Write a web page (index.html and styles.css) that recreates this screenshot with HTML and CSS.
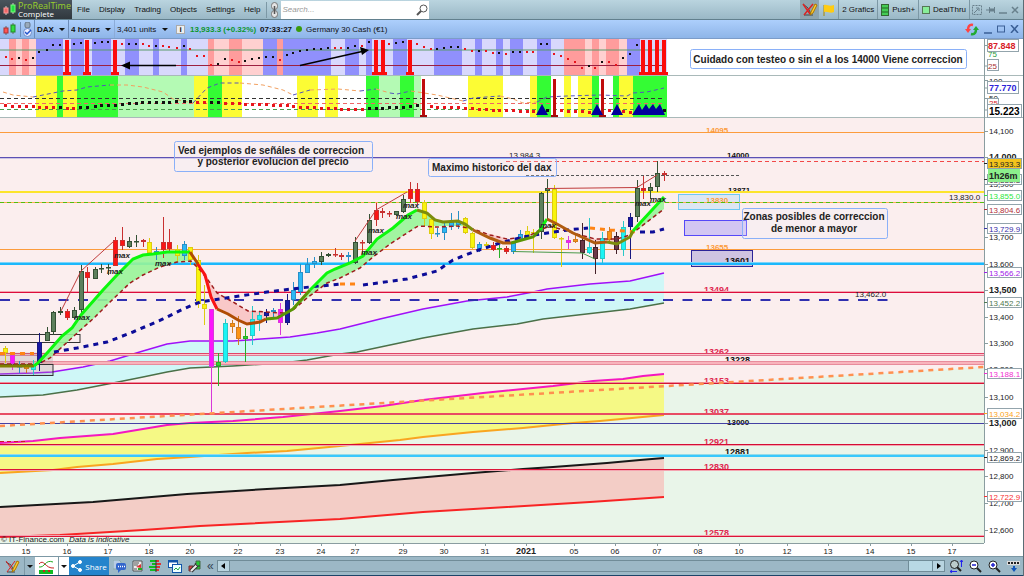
FILE: index.html
```html
<!DOCTYPE html>
<html lang="es">
<head>
    <meta charset="UTF-8">
    <meta name="viewport" content="width=device-width, initial-scale=1.0">
    <title>ProRealTime - DAX 4 hours</title>
    <link rel="stylesheet" href="styles.css">
</head>
<body>
    <header class="menubar">
        <div class="logo">
            <svg width="13" height="13" viewBox="0 0 13 13">
                <path d="M3 3v9M10 0v11" stroke="#ccc"/>
                <rect x="1" y="5" width="4" height="5" fill="#e66" stroke="#f99"/>
                <rect x="8" y="2" width="4" height="7" fill="#2d4" stroke="#7f7"/>
            </svg>
            <div class="logo-text"><span class="brand">ProRealTime</span><span>Complete</span></div>
        </div>
        <nav class="menu">
            <button type="button">File</button>
            <button type="button">Display</button>
            <button type="button">Trading</button>
            <button type="button">Objects</button>
            <button type="button">Settings</button>
            <button type="button">Help</button>
        </nav>
        <button type="button" class="chain" aria-label="Link">
            <svg width="9" height="16" viewBox="0 0 9 16" fill="none" stroke="#777">
                <rect x="1.500" y=".5" width="6" height="7" rx="3" fill="#e4e4e4"/><rect x="1.500" y="8.500" width="6" height="7" rx="3" fill="#e4e4e4"/><path d="M4.500 4v8" stroke="#555" stroke-width="1.500"/>
            </svg>
        </button>
        <div class="search">
            <input type="text" placeholder="Search..." aria-label="Search">
            <svg width="12" height="12" viewBox="0 0 12 12" fill="none" stroke="#555">
                <circle cx="7.500" cy="4.500" r="3.500"/><path d="M5 7L1 11" stroke-width="2"/>
            </svg>
        </div>
        <div class="menu-right">
            <button type="button" class="draw" aria-label="Draw">
                <svg width="16" height="15" viewBox="0 0 16 15" fill="none">
                    <path d="M1 2l5 4 3 6M2 13h9" stroke="#444"/><path d="M2 13L11 2M1 2l7 10" stroke="#d22" stroke-width="1.500"/><path d="M9 10l4-8 2 1-4 8-3 2z" fill="#fc3" stroke="#a70"/>
                </svg>
            </button>
            <button type="button" class="flag" aria-label="Flag">
                <svg width="12" height="12" viewBox="0 0 12 12"><path d="M1 1v11" stroke="#a80"/><path d="M1 1c3-1 5 2 10 0v7c-4 2-6-1-10 0z" fill="#fc1"/></svg>
            </button>
            <button type="button" class="cell">2 Grafics</button>
            <button type="button" class="cell">
                <svg width="8" height="12" viewBox="0 0 8 12"><rect x=".5" y=".5" width="7" height="11" fill="#4c5" stroke="#363"/><path d="M1 4h6M1 8h6" stroke="#262"/></svg>
                Push+
            </button>
            <button type="button" class="cell">
                <svg width="8" height="8" viewBox="0 0 8 8"><rect x=".5" y=".5" width="7" height="7" fill="#8e9" stroke="#575"/></svg>
                DealThru
            </button>
            <div class="window-icons">
                <button type="button" aria-label="Fit"><svg width="10" height="10" viewBox="0 0 10 10" fill="none" stroke="#68808c"><rect x=".5" y=".5" width="9" height="9" stroke-dasharray="2 1"/><path d="M2 8l4-4M4 3h3v3"/></svg></button>
                <button type="button" aria-label="Pin"><svg width="9" height="8" viewBox="0 0 9 8" fill="#68808c" stroke="#68808c"><path d="M0 4h3M3.500 1v6M8.500 1v6"/><path d="M4 3h4v2H4z"/></svg></button>
                <button type="button" aria-label="Minimize"><svg width="8" height="9" viewBox="0 0 8 9" stroke="#68808c"><path d="M0 8h8" stroke-width="1.500"/></svg></button>
                <button type="button" aria-label="Close"><svg width="8" height="8" viewBox="0 0 8 8" stroke="#68808c" stroke-width="1.500"><path d="M1 1l6 6M7 1L1 7"/></svg></button>
            </div>
        </div>
    </header>

    <div class="titlebar">
        <div class="chart-icon">
            <svg width="13" height="13" viewBox="0 0 13 13">
                <path d="M3 3v9M10 0v11" stroke="#666"/>
                <rect x="1" y="5" width="4" height="5" fill="#f55" stroke="#a33"/>
                <rect x="8" y="2" width="4" height="7" fill="#3d4" stroke="#282"/>
            </svg>
        </div>
        <div class="sync-icon">
            <svg width="9" height="15" viewBox="0 0 9 15" fill="none">
                <rect x="2" y="0" width="5" height="6" rx="2" fill="#9ab" stroke="#678"/>
                <circle cx="4.500" cy="10.500" r="4" fill="#eef" stroke="#6a8ac8"/><path d="M2 10l2 2 4-4" stroke="#25c" stroke-width="1.500"/>
            </svg>
        </div>
        <label class="picker bold"><select aria-label="Instrument"><option>DAX</option></select><span class="caret"></span></label>
        <label class="picker bold"><select aria-label="Timeframe"><option>4 hours</option></select><span class="caret"></span></label>
        <label class="picker"><select aria-label="Units"><option>3,401 units</option></select><span class="caret"></span></label>
        <span class="info">i</span>
        <span class="price">13,933.3 (+0.32%)</span>
        <span class="time">07:33:27</span>
        <span class="dot"></span>
        <span>Germany 30 Cash (€1)</span>
        <div class="title-right">
            <svg width="14" height="13" viewBox="0 0 14 13" fill="none" stroke-width="2.500">
                <path d="M8 2C4 1 3 4 3 7" stroke="#f44"/><path d="M0 6h6L3 10z" fill="#f44"/><path d="M6 11c4 1 5-2 5-5" stroke="#2a3"/><path d="M8 7h6l-3-4z" fill="#2a3"/>
            </svg>
            <button type="button" aria-label="Minimize chart"><svg width="8" height="9" viewBox="0 0 8 9"><path d="M0 8h8" stroke="#3a5f96" stroke-width="1.500"/></svg></button>
            <button type="button" aria-label="Maximize chart"><svg width="8" height="8" viewBox="0 0 8 8"><rect x=".5" y="1" width="7" height="6" fill="none" stroke="#3a5f96"/></svg></button>
            <button type="button" aria-label="Close chart"><svg width="9" height="8" viewBox="0 0 9 8"><path d="M1 0l7 8M8 0L1 8" stroke="#3a5f96" stroke-width="1.500"/></svg></button>
        </div>
    </div>

    <main class="charts">
        <!-- oscillator with overbought bars -->
        <svg class="panel" viewBox="0 39 1024 37">
            <g id="oscBands"></g>
            <path d="M0 50h664" stroke="#5a9a6a"/>
            <path d="M0 65.500h664" stroke="#9c2040"/>
            <g id="oscDots"></g>
            <g id="oscBars"></g>
            <path d="M176 65.500H128M300 65.500L362 51.500" stroke="#000" stroke-width="1.500"/>
            <path d="M121 65.500l9-4v8zM369 50l-9-3 2 8z"/>
            <rect class="note-box" x="690.500" y="49.500" width="276" height="19" rx="2"/>
            <text class="note" x="828" y="63" text-anchor="middle">Cuidado con testeo o sin el a los 14000 Viene correccion</text>
            <path d="M0 75.500h1024" stroke="#a9b9b9"/>
            <path d="M984.500 39v37M984 45.500h4M984 66h4" stroke="#8a9da0"/>
            <text class="tick green" x="988" y="57">75</text>
            <rect class="tag" x="987.500" y="59.500" width="11" height="11"/>
            <text class="tick darkred" x="988" y="69">25</text>
            <rect class="tag" x="987.500" y="39.500" width="31" height="12"/>
            <text class="tick big red" x="988" y="49">87.848</text>
        </svg>

        <svg class="panel" viewBox="0 76 1024 42">
            <g id="volBands"></g>
            <g fill="none" stroke-dasharray="4 3">
                <path d="M0 98.500h664" stroke="#333"/>
                <path d="M0 103.500h664" stroke="#e66"/>
                <path d="M0 109.500h664" stroke="#4a9a4a"/>
                <g stroke="#f2a060">
                    <path d="M3 92l10 3 20 2M110 85l17 0 16 2 20 5 10 7 20 4M240 83l23 2 20 5 10 5M310 90l28-1 22 2M376 89l14 4M411 91l26 4 26 6M500 96l13 3 10 4 14-1"/>
                </g>
                <g stroke="#55b">
                    <path d="M33 97l30-6 14-1 10-3 23-2M193 103l14-15 13-5 20 0M293 95l17-5M360 91l16-2M390 93l7 1 14-3M463 101l10-3 27-2M537 102l10-5 20-1 33-1 27 1 6-3 14-1 17-4"/>
                </g>
            </g>
            <g id="volDots"></g>
            <g id="volBars"></g>
            <path fill="#00009c" d="M536 115l6-11 6 11zM591 115l6-11 6 11zM611 115l6-11 6 11zM632 115l7-11 3 6 4-6 3 5 4-5 3 5 4-5 5 11z"/>
            <path d="M0 117.500h1024" stroke="#a9b9b9"/>
            <path d="M984.500 76v42M984 80.500h4M984 88h4M984 98.500h4M984 110h4" stroke="#8a9da0"/>
            <text class="tick" x="989" y="84">100</text>
            <text class="tick" x="989" y="101">50</text>
            <rect class="tag" x="987.500" y="98.500" width="11" height="9"/>
            <text class="tick red" x="989" y="106">25</text>
            <rect class="tag" x="987.500" y="81.500" width="31" height="12"/>
            <text class="tick big blue" x="989" y="91">77.770</text>
            <rect class="tag" x="987.500" y="104.500" width="34" height="13"/>
            <text class="tick huge" x="989" y="115">15.223</text>
        </svg>

        <svg class="panel" viewBox="0 118 1024 425">
            <rect x="0" y="118" width="984" height="425" fill="#fbeeee"/>
            <path d="M0 426L984 367V543H0z" fill="#e9f5e9"/>
            <!-- moving average bands -->
            <path id="cyanBand" fill="#cff7f7"/>
            <path id="yellowBand" fill="#f5f985"/>
            <path id="redBand" fill="#f3cdc6"/>
            <g fill="none" stroke-width="2">
                <path id="purpleLine" stroke="#a010f8" stroke-width="1.500"/>
                <path id="greenLine" stroke="#4a7048" stroke-width="1.500"/>
                <path id="magentaLine" stroke="#f418c0"/>
                <path id="orangeLine" stroke="#f9a520"/>
                <path id="blackLine" stroke="#181818"/>
                <path id="redLine" stroke="#f82424"/>
            </g>
            <!-- possible correction zones -->
            <rect x="678.500" y="194.500" width="61" height="15" fill="#dce6f2" stroke="#6cc8f4"/>
            <rect x="684.500" y="220.500" width="62" height="15" fill="#d2c6f2" stroke="#5548f8"/>
            <rect x="691.500" y="250.500" width="61" height="16" fill="#cfc4e2" stroke="#2c2498"/>
            <g id="levelLabels"></g>
            <text class="tick" x="509" y="158">13,984.3</text>
            <g id="levels"></g>
            <path d="M0 441.500h28" stroke="#d01828" stroke-dasharray="4 3"/>
            <path d="M0 426L984 367" fill="none" stroke="#ff9050" stroke-width="2.500" stroke-dasharray="5 5"/>
            <path d="M0 300h888" stroke="#3030b0" stroke-width="2" stroke-dasharray="10 9.500"/>
            <path d="M506 161.500h478" stroke="#f24848" stroke-dasharray="4 3"/>
            <path d="M526 175.500h214" stroke="#555" stroke-dasharray="3 2"/>
            <g fill="#9994" stroke="#333">
                <rect x="-1" y="334.500" width="81" height="8" fill="none"/>
                <rect x="-1" y="352.500" width="54" height="12" stroke="none"/>
                <rect x="-1" y="364.500" width="54" height="11"/>
            </g>
            <!-- clouds between fast and slow average -->
            <g fill="#98f498" opacity=".9">
                <path d="M38 363L48 352 62 336 72 328 81 315 103 290 117 275 133 259 143 255 167 252 191 252 191 261 177 262 160 267 143 275 130 283 110 302 95 317 90 322 75 335 50 358z"/>
                <path d="M293 309L310 290 327 273 335 269 350 263 363 256 377 239 393 228 408 215 417 210 427 213 435 220 443 222 458 221 465 226 443 226 418 226 407 233 390 244 373 257 360 268 340 278 327 283 307 298z"/>
                <path d="M633 231L640 223 664 196 664 209 640 228z"/>
            </g>
            <path d="M205 275L211 297 217 309 228 314 247 324 260 322 282 317 285 312 248 311 233 302 217 293z" fill="#f9c8c8"/>
            <g fill="#f9c8c8"><path d="M473 230L490 238 507 243 513 240 490 234zM573 233L595 243 617 243 617 239 595 239z"/></g>
            <g id="candles"></g>
            <!-- swing lines -->
            <path fill="none" stroke="#c03c3c" d="M61 311L81 271 114 241M355 241L376 210 407 192M547 188.500L637 187.500 657 175"/>
            <path fill="none" stroke="#4a9a4a" d="M513 251.500L582 253 595 259"/>
            <path fill="none" stroke="#9c1c1c" stroke-width="1.500" stroke-dasharray="4 3" d="M0 364H38L50 358 75 335 95 317 110 302 130 283 143 275 160 267 177 262 191 261 200 270 208 280 217 293 233 302 248 311 283 313 293 310 307 298 327 283 340 278 360 268 373 257 390 244 407 233 418 226 437 227 457 226 473 229 490 235 507 239 527 237 540 230 550 226 573 233 595 239 617 239 630 235 664 209"/>
            <g fill="none" stroke="#0c0c98" stroke-width="3" stroke-dasharray="5 5">
                <path d="M54 352L77 348 107 342 133 332 163 319 183 309 200 302 233 297 267 292 300 288 340 284M363 285L407 279 437 271 453 260 473 252 500 243 523 237 540 234 567 230 588 228M640 232L653 232 664 229"/>
                <path stroke="#ff8414" d="M0 353.500H34M340 284H360M590 228L610 230 638 232"/>
            </g>
            <g fill="none" stroke-width="3">
                <path stroke="#808000" d="M0 366H34"/>
                <path stroke="#0cf80c" d="M34 366L38 363 48 352 62 336 72 328 81 315 103 290 117 275 133 259 143 255 153 254 167 252 182 252 190 252"/>
                <path stroke="#f81414" d="M197 263L205 275 211 297 217 309"/>
                <path stroke="#b04c04" d="M190 252L198 264M217 309L228 314 238 320 247 324 260 322 266 319"/>
                <path stroke="#5a9404" d="M266 319L277 318 293 309 310 290"/>
                <path stroke="#0cf80c" d="M310 290L327 273 335 269 350 263 363 256 377 239 393 228 408 215 417 210"/>
                <path stroke="#7c8c0c" d="M417 210L427 213 435 220 443 222 458 221 465 224 473 230"/>
                <path stroke="#b05c10" d="M473 230L490 238 503 243 511 243"/>
                <path stroke="#5a9404" d="M511 243L533 237 540 230"/>
                <path stroke="#0cf80c" d="M540 230L547 219"/>
                <path stroke="#b05c10" d="M547 219L557 224 573 233 595 243 607 242"/>
                <path stroke="#7c8c0c" d="M607 242L617 244 630 237 633 231"/>
                <path stroke="#0cf80c" d="M633 231L640 223 664 197"/>
            </g>
            <g id="maxLabels"></g>
            <g class="note">
                <rect class="note-box clear" x="174.500" y="141.500" width="198" height="30" rx="2"/>
                <text x="271" y="154" text-anchor="middle">Ved ejemplos de señáles de correccion</text>
                <text x="273" y="165" text-anchor="middle">y posterior evolucion del precio</text>
                <rect class="note-box clear" x="428.500" y="158.500" width="128" height="18" rx="2"/>
                <text x="432" y="171">Maximo historico del dax</text>
                <rect class="note-box clear" x="742.500" y="208.500" width="145" height="30" rx="2"/>
                <text x="814" y="220" text-anchor="middle">Zonas posibles de correccion</text>
                <text x="814" y="232" text-anchor="middle">de menor a mayor</text>
            </g>
            <g class="tick">
                <text x="949" y="200">13,830.0</text>
                <text x="855" y="297">13,462.0</text>
                <text x="1" y="542">© IT-Finance.com</text>
                <text x="69" y="542" font-style="italic">Data is indicative</text>
            </g>
            <path d="M984.500 118v425" stroke="#8a9da0"/>
            <g id="priceAxis"></g>
        </svg>

        <svg class="panel" viewBox="0 543 1024 13">
            <path d="M0 543.500h984" stroke="#8a9da0"/>
            <g id="timeAxis"></g>
        </svg>
    </main>

    <footer class="toolbar">
        <button type="button" class="tool wide" aria-label="Draw tools">
            <svg width="15" height="13" viewBox="0 0 15 13" fill="none"><path d="M1 2l5 3 3 6M2 12h8" stroke="#444"/><path d="M2 12L10 1M1 1l7 10" stroke="#d22"/><path d="M8 9l4-8 2 1-4 8-3 2z" fill="#fc3" stroke="#a70"/></svg>
        </button>
        <button type="button" class="tool arrow" aria-label="More drawing"><span class="caret"></span></button>
        <button type="button" class="tool white" aria-label="Indicators">
            <svg width="15" height="15" viewBox="0 0 15 15" fill="none"><path d="M0 5c5-6 6 5 15 4" stroke="#c22"/><path d="M0 8C6 9 6 0 14 3" stroke="#2a2"/><path d="M0 15v-4h4v2h2v-2h3v2h2v-2h3v4z" fill="#1b2"/><path d="M4 12h2M9 12h2" stroke="#c22" stroke-width="2"/></svg>
        </button>
        <button type="button" class="tool white arrow" aria-label="More indicators"><span class="caret"></span></button>
        <button type="button" class="share">
            <svg width="12" height="12" viewBox="0 0 12 12" fill="#fff" stroke="#fff"><path d="M9 2L2 6l7 4" fill="none"/><circle cx="9" cy="2" r="1.500"/><circle cx="2" cy="6" r="1.500"/><circle cx="9" cy="10" r="1.500"/></svg>
            Share
        </button>
        <div class="tool-icons">
            <button type="button" aria-label="Chat"><svg width="13" height="13" viewBox="0 0 13 13"><path d="M0 0h6l2 2v7H0z" fill="#b8cce4" stroke="#8aa"/><rect x="3" y="3" width="10" height="7" rx="2" fill="#36c"/><path d="M5 9v4l4-4z" fill="#36c"/><path d="M5 6.500h7" stroke="#fff" stroke-width="1.500" stroke-dasharray="1 1"/></svg></button>
            <button type="button" aria-label="News"><svg width="11" height="12" viewBox="0 0 11 12" fill="none"><path d="M1 1h9v10H1z" fill="#eee" stroke="#555"/><path d="M2 3h5M2 5h4M2 9h3" stroke="#555"/><path d="M4 7l5-3v4z" fill="#d33"/><path d="M6 9h4" stroke="#2a2" stroke-width="2"/></svg></button>
            <button type="button" aria-label="Order book"><svg width="13" height="12" viewBox="0 0 13 12"><path d="M1 1h6M3 4h4M0 7h7M1 10h6" stroke="#1b2" stroke-width="2"/><path d="M7 1h3M7 4h5M7 7h4M7 10h3" stroke="#d33" stroke-width="2"/><path d="M7 0v12" stroke="#333"/></svg></button>
            <button type="button" aria-label="Windows"><svg width="14" height="13" viewBox="0 0 14 13" fill="none" stroke="#15a"><rect x=".5" y=".5" width="9" height="7" fill="#fff"/><path d="M0 1.500h9M5 5.500h8" stroke-width="2"/><rect x="4.500" y="4.500" width="9" height="8" fill="#eff"/><path d="M6 10l2-2 2 2 2-3" stroke="#2a4"/></svg></button>
            <button type="button" aria-label="Trading tools"><svg width="13" height="13" viewBox="0 0 13 13"><path d="M8 1h4v8H8z" fill="#2c3" stroke="#464"/><path d="M1 6h4v5H1z" fill="#d44" stroke="#633"/><path d="M3 11l6-6" stroke="#333" stroke-width="4"/><path d="M3 11l6-6" stroke="#eee" stroke-width="2"/><path d="M7 3l2 3 3 0" fill="none" stroke="#333"/></svg></button>
            <button type="button" class="collapse" aria-label="Collapse">«</button>
        </div>
        <div class="scroll">
            <button type="button" aria-label="Scroll left"><svg width="4" height="6" viewBox="0 0 4 6"><path d="M4 0v6L0 3z"/></svg></button>
            <div class="track"><div class="thumb"></div></div>
            <button type="button" aria-label="Scroll right"><svg width="4" height="6" viewBox="0 0 4 6"><path d="M0 0v6l4-3z"/></svg></button>
        </div>
        <div class="zoom-icons">
            <button type="button" aria-label="Fit zoom"><svg width="14" height="14" viewBox="0 0 14 14" fill="none" stroke="#222"><circle cx="5.500" cy="5.500" r="4" fill="#bcc"/><path d="M8 8l4 4" stroke-width="2"/><path d="M12.500 1v7M11 3l1.500-2L14 3M1 12.500h7M3 11l-2 1.500L3 14" stroke="#22e"/></svg></button>
            <button type="button" aria-label="Zoom out"><svg width="13" height="13" viewBox="0 0 13 13" fill="none" stroke="#222"><circle cx="5" cy="5" r="4" fill="#fff"/><path d="M8 8l4 4" stroke-width="2"/><path d="M3 5h4" stroke="#22c" stroke-width="1.500"/></svg></button>
            <button type="button" aria-label="Zoom in"><svg width="13" height="13" viewBox="0 0 13 13" fill="none" stroke="#222"><circle cx="5" cy="5" r="4" fill="#fff"/><path d="M8 8l4 4" stroke-width="2"/><path d="M3 5h4M5 3v4" stroke="#22c" stroke-width="1.500"/></svg></button>
            <button type="button" aria-label="Scale"><svg width="13" height="12" viewBox="0 0 13 12" fill="none"><path d="M0 1h13v4H0z" fill="#ddd"/><path d="M1 3h12" stroke="#222" stroke-width="2" stroke-dasharray="2 1"/><path d="M7 6v4" stroke="#15b" stroke-width="2"/><path d="M4 8h6l-3 4z" fill="#15b"/></svg></button>
        </div>
    </footer>
    <script src="chart.js"></script>
</body>
</html>
```
FILE: styles.css
```css
* {
    box-sizing: border-box;
}

body {
    margin: 0;
    min-height: 100vh;
    display: flex;
    flex-direction: column;
    background-color: #fff;
    font-family: "Liberation Sans", Arial, sans-serif;
    font-size: 8px;
    color: #111;
    border-right: 1px solid #5a6c74;
}

button {
    font: inherit;
    color: inherit;
    background: none;
    border: none;
    padding: 0;
    cursor: pointer;
}

svg {
    display: block;
    flex-shrink: 0;
}

/* top menu */
.menubar {
    display: flex;
    align-items: center;
    height: 20px;
    background: linear-gradient(#bad4df, #9ab8c6);
    border-bottom: 1px solid #62808e;
}

.logo {
    display: flex;
    align-items: center;
    gap: 2px;
    width: 72px;
    height: 100%;
    padding-left: 3px;
    background: linear-gradient(#4a545c, #30383e);
    color: #fff;
}

.logo-text {
    display: flex;
    flex-direction: column;
    font-family: "Open Sans", sans-serif;
    font-size: 8px;
    line-height: 8px;
}

.brand {
    color: #9ad02c;
    font-size: 9px;
}

.menu {
    display: flex;
    gap: 9px;
    padding: 0 6px 0 5px;
}

.chain {
    display: flex;
    justify-content: center;
    width: 15px;
    border-left: 1px solid #7c98a5;
}

.search {
    display: flex;
    align-items: center;
    width: 148px;
    height: 18px;
    padding: 0 1px;
    background-color: #fff;
}

.search input {
    flex: 1;
    min-width: 0;
    border: none;
    padding: 0;
    font: inherit;
    font-style: italic;
    outline: none;
}

.search input::placeholder {
    color: #999;
}

.menu-right {
    display: flex;
    align-items: center;
    height: 100%;
    margin-left: auto;
}

.draw {
    display: flex;
    align-items: center;
    justify-content: center;
    width: 19px;
    height: 19px;
    background-color: #8da5b0;
}

.flag {
    padding: 0 3px 0 4px;
}

.cell {
    display: flex;
    align-items: center;
    gap: 3px;
    height: 100%;
    padding: 0 3px;
    border-left: 1px solid #7c98a5;
}

.window-icons {
    display: flex;
    align-items: center;
    gap: 4px;
    height: 100%;
    padding: 0 4px 0 2px;
    border-left: 1px solid #7c98a5;
}

/* chart title */
.titlebar {
    display: flex;
    align-items: center;
    height: 19px;
    background: linear-gradient(#adcffc, #8eb5e8);
    border-bottom: 1px solid #7c9cc8;
    white-space: nowrap;
}

.chart-icon {
    padding: 0 4px 0 3px;
}

.sync-icon {
    padding: 0 2px;
    border-left: 1px solid #6c8cb8;
}

.picker {
    display: flex;
    align-items: center;
    gap: 5px;
    height: 100%;
    padding: 0 3px 0 2px;
    border-left: 1px solid #6c8cb8;
}

.picker + .picker + .picker {
    border-left-color: #8cacd8;
}

.picker select {
    appearance: none;
    border: none;
    background: none;
    padding: 0;
    font: inherit;
    color: inherit;
}

.bold {
    font-weight: bold;
}

.caret {
    display: inline-block;
    border: 3px solid transparent;
    border-top: 3px solid #111;
    border-bottom: none;
}

.info {
    width: 9px;
    height: 9px;
    margin: 0 5px;
    background-color: #eee;
    border: 1px solid #aaa;
    font-weight: bold;
    line-height: 8px;
    text-align: center;
}

.price {
    color: #0c962c;
    font-weight: bold;
}

.time {
    margin: 0 4px;
    font-weight: bold;
}

.dot {
    width: 6px;
    height: 6px;
    margin-right: 4px;
    border-radius: 50%;
    background-color: #3a9a0c;
}

.title-right {
    display: flex;
    align-items: center;
    gap: 5px;
    margin-left: auto;
    padding-right: 4px;
}

/* panels */
.charts {
    margin-right: -1px;
}

.panel {
    width: 100%;
    height: auto;
}

.panel text {
    fill: #222;
}

.panel .note {
    font-size: 10px;
    font-weight: bold;
}

.note-box {
    fill: #fff;
    stroke: #8ab0f8;
}

.note-box.clear {
    fill: #f0f0ff;
    fill-opacity: .2;
}

.tag {
    fill: #fff;
    stroke: #93a4ac;
}

.tick {
    font-size: 8px;
}

.panel .bold {
    font-size: 9px;
    font-weight: bold;
}

.panel .big {
    font-size: 9px;
    font-weight: bold;
}

.panel .huge {
    font-size: 10px;
    font-weight: bold;
    fill: #000;
}

.panel .red {
    fill: #d81c28;
}

.panel .darkred {
    fill: #a83030;
}

.panel .green {
    fill: #2c9c3c;
}

.panel .blue {
    fill: #2c24d8;
}

.max {
    font-size: 8px;
    font-style: italic;
    font-weight: bold;
}

/* bottom toolbar */
.toolbar {
    display: flex;
    align-items: center;
    height: 20px;
    background-color: #9cb8c6;
    border-top: 1px solid #7c98a5;
    border-bottom: 1px solid #1c4468;
}

.tool {
    display: flex;
    align-items: center;
    justify-content: center;
    width: 23px;
    height: 100%;
}

.wide {
    width: 24px;
}

.arrow {
    width: 11px;
    border-left: 1px solid #7c98a5;
}

.white {
    background-color: #fff;
}

.share {
    display: flex;
    align-items: center;
    justify-content: center;
    gap: 2px;
    width: 40px;
    height: 100%;
    background-color: #2484cc;
    color: #fff;
    font-family: "Open Sans", sans-serif;
}

.tool-icons {
    display: flex;
    align-items: center;
    gap: 6px;
    padding: 0 3px 0 4px;
}

.collapse {
    font-size: 12px;
    line-height: 12px;
    color: #345;
}

.scroll {
    display: flex;
    flex: 1;
    height: 12px;
    border: 1px solid #708c98;
}

.scroll button {
    display: flex;
    align-items: center;
    justify-content: center;
    width: 11px;
    background-color: #b8d4e0;
}

.track {
    display: flex;
    flex: 1;
    justify-content: flex-end;
    border-left: 1px solid #708c98;
    border-right: 1px solid #708c98;
}

.thumb {
    width: 24px;
    background-color: #b8d8e4;
    border-left: 1px solid #708c98;
}

.zoom-icons {
    display: flex;
    align-items: center;
    gap: 6px;
    padding: 0 3px 0 4px;
}
```
FILE: chart.js
```js
const NS = "http://www.w3.org/2000/svg";

function add(parentId, tag, attrs, text) {
    const el = document.createElementNS(NS, tag);
    for (const key in attrs) {
        el.setAttribute(key, attrs[key]);
    }
    if (text) {
        el.textContent = text;
    }
    document.getElementById(parentId).appendChild(el);
}

// coloured background bands: [start, end, colour key]
const bandColors = { L: "#d8d8fc", B: "#9090fc", S: "#ff9c9c", P: "#ffd0d0", Y: "#fcfc34", G: "#34fc34", g: "#b4fab4" };

function drawBands(id, y, height, bands) {
    bands.forEach(([x1, x2, c]) => add(id, "rect", { x: x1, y: y, width: x2 - x1, height: height, fill: bandColors[c] }));
}

drawBands("oscBands", 39, 37, [
    [0, 667, "L"], [9, 16, "S"], [16, 22, "P"], [22, 29, "S"], [29, 36, "P"], [36, 63, "B"], [71, 84, "B"], [92, 111, "B"],
    [125, 139, "B"], [153, 159, "B"], [181, 187, "B"], [208, 214, "S"], [214, 229, "P"], [229, 242, "S"], [242, 263, "P"],
    [263, 277, "B"], [277, 283, "S"], [283, 331, "B"], [345, 359, "B"], [366, 372, "B"], [393, 407, "B"], [434, 462, "B"],
    [475, 482, "B"], [496, 503, "B"], [510, 523, "B"], [537, 551, "B"], [564, 585, "S"], [585, 592, "P"], [592, 599, "S"],
    [599, 606, "P"], [606, 619, "S"], [619, 627, "P"], [627, 640, "B"]
]);
drawBands("volBands", 76, 42, [
    [36, 57, "Y"], [57, 63, "G"], [63, 77, "Y"], [77, 118, "G"], [118, 194, "g"], [194, 208, "Y"], [208, 222, "G"],
    [222, 242, "Y"], [297, 318, "Y"], [325, 338, "Y"], [366, 379, "G"], [379, 400, "g"], [400, 414, "G"], [414, 421, "g"],
    [468, 503, "Y"], [530, 537, "Y"], [537, 551, "G"], [564, 571, "Y"], [578, 592, "Y"], [592, 599, "G"], [613, 619, "G"],
    [619, 633, "Y"], [633, 667, "G"]
]);

// square markers, r = red, k = black
function drawDots(id, size, dots) {
    dots.forEach(([x, y, c]) => add(id, "rect", { x: x - 1, y: y - 1, width: size, height: size, fill: c === "r" ? "#e8141c" : "#101010" }));
}

drawDots("oscDots", 2, [
    [6, 57, "r"], [12, 59, "r"], [19, 58, "k"], [26, 60, "r"], [33, 58, "k"], [39, 52, "k"], [47, 50, "k"], [53, 45, "k"], [60, 45, "k"],
    [74, 44, "k"], [81, 43, "k"], [95, 43, "k"], [102, 42, "k"], [108, 42, "k"], [122, 44, "r"], [129, 44, "k"], [136, 44, "k"],
    [143, 44, "r"], [149, 46, "r"], [156, 46, "k"], [163, 46, "r"], [169, 47, "r"], [177, 48, "r"], [184, 46, "k"], [190, 49, "r"],
    [197, 56, "r"], [204, 56, "r"], [211, 65, "r"], [218, 64, "k"], [225, 59, "k"], [232, 60, "r"], [239, 62, "r"], [245, 61, "k"],
    [252, 59, "k"], [259, 58, "k"], [266, 57, "k"], [273, 57, "k"], [280, 60, "r"], [287, 55, "k"], [293, 53, "k"], [300, 51, "k"],
    [307, 50, "k"], [314, 49, "k"], [321, 49, "k"], [328, 48, "k"], [335, 48, "r"], [341, 48, "r"], [348, 48, "k"], [355, 46, "k"],
    [362, 46, "r"], [369, 42, "k"], [389, 44, "r"], [396, 43, "k"], [403, 42, "k"], [417, 44, "r"], [424, 47, "r"], [431, 49, "r"],
    [437, 49, "k"], [444, 48, "k"], [451, 47, "k"], [458, 47, "k"], [465, 49, "r"], [472, 51, "r"], [479, 51, "k"], [486, 51, "r"],
    [493, 53, "r"], [499, 53, "k"], [506, 54, "r"], [513, 52, "k"], [520, 52, "k"], [527, 52, "r"], [533, 52, "r"], [541, 44, "k"],
    [547, 44, "k"], [554, 54, "r"], [561, 56, "r"], [568, 59, "r"], [575, 62, "r"], [582, 68, "r"], [589, 66, "k"], [595, 68, "r"],
    [602, 62, "k"], [609, 62, "r"], [616, 65, "r"], [623, 58, "k"], [630, 54, "k"], [637, 45, "k"]
]);
drawDots("volDots", 3, [
    [5, 105, "r"], [12, 106, "r"], [19, 106, "r"], [26, 106, "r"], [33, 106, "r"], [39, 107, "r"], [46, 107, "r"], [53, 107, "r"],
    [60, 107, "k"], [67, 108, "r"], [73, 108, "r"], [80, 107, "k"], [87, 107, "k"], [95, 106, "k"], [101, 105, "k"], [108, 105, "k"],
    [115, 105, "k"], [122, 104, "k"], [129, 103, "k"], [136, 103, "k"], [142, 102, "k"], [149, 102, "k"], [156, 102, "k"],
    [163, 102, "k"], [169, 102, "k"], [176, 101, "k"], [184, 101, "k"], [190, 101, "k"], [197, 102, "r"], [204, 102, "r"],
    [211, 102, "k"], [218, 102, "k"], [225, 103, "r"], [232, 103, "r"], [239, 103, "r"], [245, 104, "r"], [252, 104, "r"],
    [259, 104, "r"], [266, 104, "r"], [273, 105, "r"], [280, 105, "r"], [287, 105, "r"], [293, 106, "r"], [300, 107, "r"],
    [307, 107, "r"], [314, 107, "r"], [321, 108, "r"], [328, 108, "r"], [335, 108, "r"], [341, 109, "r"], [348, 109, "r"],
    [355, 109, "r"], [362, 109, "r"], [369, 108, "k"], [376, 108, "k"], [382, 108, "k"], [389, 107, "k"], [396, 107, "k"],
    [403, 107, "k"], [410, 106, "k"], [417, 105, "k"], [431, 106, "r"], [437, 107, "r"], [444, 107, "r"], [451, 107, "r"],
    [458, 107, "r"], [465, 108, "r"], [472, 108, "r"], [479, 109, "r"], [486, 109, "r"], [493, 110, "r"], [499, 110, "r"],
    [506, 110, "r"], [513, 110, "r"], [520, 111, "r"], [527, 111, "r"], [533, 111, "r"], [547, 110, "k"], [561, 110, "r"],
    [568, 111, "r"], [575, 111, "r"], [582, 111, "r"], [589, 112, "r"], [609, 110, "r"], [623, 111, "r"], [630, 112, "r"], [664, 110, "k"]
]);

[67, 87, 115, 376, 383, 410, 643, 650, 657, 664].forEach(x => {
    add("oscBars", "rect", { x: x - 2, y: 40, width: 4, height: 36, fill: "#fc0c0c" });
    add("oscBars", "rect", { x: x - 4, y: 72, width: 8, height: 4, fill: "#fc0c0c" });
});
[423, 554, 602].forEach(x => {
    add("volBars", "rect", { x: x - 1, y: 79, width: 3, height: 39, fill: "#c00c0c" });
    add("volBars", "rect", { x: x - 3, y: 115, width: 7, height: 3, fill: "#a00c0c" });
});

// long averages
const purple = "0,374 33,373 52,372 83,367 110,361 143,351 167,344 190,341 233,341 290,337 317,333 340,329 380,319 423,309 467,301 507,297 533,292 547,289 590,284 630,281 664,273";
const green = "0,397 43,395 77,390 113,383 143,377 167,372 190,368 233,366 283,363 307,360 340,354 357,352 390,345 423,338 473,329 517,324 543,319 630,309 664,303";
const magenta = "0,443 33,441 60,438 113,434 167,425 190,423 233,421 283,417 340,411 383,406 423,400 483,393 553,386 593,381 623,379 643,376 664,374";
const orange = "0,473 53,470 77,467 113,464 157,459 190,457 247,453 287,451 340,446 400,440 423,437 473,432 523,428 573,423 600,421 664,415";
const black = "0,507 93,502 187,494 267,489 340,485 393,480 473,473 523,469 553,467 607,463 640,460 664,458";
const red = "0,537 60,535 143,530 200,526 340,519 423,512 507,507 590,502 664,497";

function drawLine(id, points) {
    document.getElementById(id).setAttribute("d", "M" + points.split(" ").join("L"));
}

function drawBand(id, top, bottom) {
    const all = top.split(" ").concat(bottom.split(" ").reverse());
    document.getElementById(id).setAttribute("d", "M" + all.join("L") + "z");
}

drawLine("purpleLine", purple);
drawLine("greenLine", green);
drawLine("magentaLine", magenta);
drawLine("orangeLine", orange);
drawLine("blackLine", black);
drawLine("redLine", red);
drawBand("cyanBand", purple, green);
drawBand("yellowBand", magenta, orange);
drawBand("redBand", black, red);

// horizontal levels: [y, height, colour]
[
    [132, 1, "#fc9c3c"], [157, 1, "#5c50b4"], [158, 1, "#ccc4e4"], [191, 2, "#fce42c"], [202, 1, "#fcac54"], [249, 1, "#fc9c3c"],
    [262, 1, "#7cd4f8"], [263, 2, "#1cb8fc"], [291, 1, "#f4a4b0"], [292, 1, "#dc0c3c"], [353, 1, "#e04468"], [354, 1, "#fcc4cc"], [355, 1, "#e07c94"],
    [361, 4, "#f8b4bc"], [361, 1, "#e88c9c"], [364, 1, "#e88c9c"], [382, 1, "#f08c9c"], [383, 1, "#d41434"],
    [413, 2, "#e84c64"], [423, 1, "#4440a4"], [444, 1, "#d40c34"], [445, 1, "#f4a4b0"], [454, 1, "#94dce8"],
    [455, 2, "#38c8fc"], [469, 1, "#dc1438"], [470, 1, "#f4a4b0"], [535, 1, "#f4a4b0"], [536, 1, "#dc1438"]
].forEach(([y, h, c]) => add("levels", "rect", { x: 0, y: y, width: 984, height: h, fill: c }));
add("levels", "path", { d: "M0 202.5H984", stroke: "#54bc0c", "stroke-dasharray": "4 3" });

[
    [706, 133, 8, "#fc9c3c", "14095"], [727, 158, 8, "#111", "14000"], [728, 193, 8, "#111", "13871"],
    [706, 203, 8, "#fc9c3c", "13830"], [706, 250, 8, "#fc9c3c", "13655"], [725, 264, 9, "#111", "13601"],
    [704, 293, 9, "#e02850", "13494"], [704, 355, 9, "#e02850", "13262"], [725, 363, 9, "#111", "13228"],
    [704, 384, 9, "#e02850", "13153"], [704, 415, 9, "#e02850", "13037"], [727, 425, 8, "#111", "13000"],
    [704, 445, 9, "#e02850", "12921"], [725, 455, 9, "#111", "12881"], [704, 470, 9, "#e02850", "12830"],
    [704, 536, 9, "#e02850", "12578"]
].forEach(([x, y, size, c, t]) => add("levelLabels", "text", { x: x, y: y, style: "fill:" + c, "font-size": size, "font-weight": "bold" }, t));

// candles: [x, high, low, body top, body bottom, colour key]
const candleColors = {
    R: ["#fc1414", "#c83030"], G: ["#5c805c", "#345034"], Y: ["#f8f40c", "#dccc10"], M: ["#fc14fc", "#d838d8"],
    C: ["#1cf4f4", "#28c8c8"], B: ["#2cb8f4", "#2890c8"], N: ["#1818a4", "#181880"], O: ["#fc9414", "#d07c20"],
    g: ["#30d430", "#28b028"], P: ["#6c3848", "#442028"]
};
[
    [5, 346, 363, 348, 353, "Y"], [12, 353, 370, 355, 364, "M"], [19, 361, 373, 366, 367, "B"], [26, 364, 373, 366, 369, "O"],
    [33, 360, 375, 365, 370, "C"], [39, 333, 371, 342, 363, "N"], [47, 327, 341, 332, 341, "G"], [53, 311, 335, 312, 332, "G"],
    [60, 307, 315, 311, 313, "G"], [67, 309, 320, 311, 318, "R"], [74, 307, 319, 310, 318, "G"], [81, 265, 316, 271, 310, "G"],
    [87, 267, 292, 272, 278, "R"], [95, 267, 279, 269, 279, "G"], [101, 264, 273, 268, 269, "G"], [108, 264, 275, 267, 268, "G"],
    [115, 237, 266, 240, 266, "R"], [122, 227, 250, 240, 246, "R"], [129, 237, 248, 241, 247, "G"], [136, 235, 247, 241, 242, "G"],
    [143, 239, 247, 240, 242, "R"], [149, 238, 255, 242, 253, "Y"], [156, 247, 260, 251, 253, "B"], [163, 217, 258, 242, 250, "R"],
    [169, 229, 252, 242, 249, "R"], [177, 245, 261, 249, 256, "Y"], [184, 241, 260, 244, 256, "B"], [190, 247, 265, 247, 260, "Y"],
    [198, 255, 308, 260, 304, "Y"], [204, 285, 325, 304, 309, "Y"], [211, 309, 412, 309, 367, "M"], [218, 353, 386, 362, 366, "g"],
    [225, 319, 363, 323, 362, "C"], [232, 320, 333, 323, 327, "O"], [238, 316, 345, 327, 339, "O"], [245, 328, 362, 336, 339, "g"],
    [252, 306, 345, 319, 336, "C"], [259, 311, 331, 315, 320, "C"], [266, 309, 323, 312, 316, "N"], [273, 308, 317, 310, 312, "B"],
    [280, 303, 335, 309, 323, "M"], [287, 294, 325, 300, 323, "N"], [293, 282, 305, 290, 300, "B"], [300, 264, 295, 272, 292, "B"],
    [307, 258, 273, 264, 273, "B"], [314, 257, 268, 261, 264, "B"], [321, 252, 265, 256, 262, "G"], [328, 253, 257, 254, 256, "G"],
    [335, 248, 257, 254, 255, "R"], [341, 253, 260, 255, 257, "R"], [348, 252, 262, 255, 257, "B"], [355, 237, 264, 242, 263, "G"],
    [362, 240, 258, 242, 243, "R"], [369, 214, 244, 220, 243, "G"], [376, 203, 226, 210, 220, "R"], [382, 208, 218, 211, 213, "R"],
    [389, 211, 217, 213, 214, "R"], [396, 211, 216, 211, 215, "G"], [403, 195, 213, 199, 212, "G"], [410, 182, 203, 189, 199, "R"],
    [417, 183, 205, 189, 202, "R"], [424, 200, 226, 202, 219, "Y"], [431, 217, 239, 219, 234, "Y"], [437, 228, 237, 233, 234, "B"],
    [444, 223, 240, 227, 233, "B"], [451, 213, 230, 222, 227, "B"], [458, 211, 229, 221, 225, "B"], [465, 217, 234, 218, 233, "Y"],
    [472, 232, 249, 233, 248, "Y"], [479, 242, 252, 244, 249, "B"], [486, 242, 247, 244, 246, "Y"], [493, 242, 251, 245, 250, "R"],
    [499, 245, 258, 248, 249, "g"], [506, 246, 254, 248, 252, "R"], [513, 241, 254, 243, 252, "B"], [520, 230, 240, 234, 239, "B"],
    [527, 226, 237, 231, 236, "Y"], [533, 229, 253, 232, 233, "Y"], [541, 192, 239, 193, 232, "G"], [547, 179, 220, 188, 191, "G"],
    [554, 185, 239, 189, 238, "Y"], [561, 237, 267, 238, 239, "Y"], [568, 236, 249, 240, 243, "M"], [575, 235, 243, 239, 242, "O"],
    [582, 223, 259, 240, 253, "P"], [589, 218, 254, 247, 253, "C"], [595, 240, 274, 247, 259, "P"], [602, 232, 263, 238, 259, "C"],
    [609, 227, 243, 231, 240, "O"], [616, 232, 254, 236, 250, "P"], [623, 221, 256, 227, 250, "C"], [630, 213, 259, 217, 227, "N"],
    [637, 180, 222, 188, 217, "G"], [643, 176, 199, 188, 191, "R"], [650, 183, 199, 187, 191, "G"], [657, 161, 192, 173, 187, "G"],
    [664, 171, 181, 173, 175, "R"]
].forEach(([x, high, low, top, bottom, c]) => {
    const [fill, edge] = candleColors[c];
    add("candles", "path", { d: `M${x + 0.5} ${high}V${low}`, stroke: edge });
    add("candles", "rect", { x: x - 1.5, y: top + 0.5, width: 4, height: Math.max(bottom - top - 1, 0.5), fill: fill, stroke: edge });
});

[[74, 320], [107, 274], [114, 258], [155, 266], [361, 255], [368, 233], [396, 219], [403, 208], [540, 228], [635, 206], [650, 202]]
    .forEach(([x, y]) => add("maxLabels", "text", { x: x, y: y, class: "max" }, "max"));

// price axis
function tick(y, text, cls) {
    add("priceAxis", "path", { d: `M984 ${y - 2.5}h4`, stroke: "#8a9da0" });
    add("priceAxis", "text", { x: 989, y: y, class: "tick " + (cls || "") }, text);
}
tick(134, "14,100"); tick(160, "14,000", "bold"); tick(187, "13,900"); tick(240, "13,700"); tick(267, "13,600");
tick(293, "13,500", "bold"); tick(320, "13,400"); tick(346, "13,300"); tick(372, "13,200"); tick(400, "13,100");
tick(426, "13,000", "bold"); tick(453, "12,900"); tick(479, "12,800"); tick(506, "12,700"); tick(533, "12,600");

// value tags on the price axis: [y, text, text colour, background]
[
    [174, "13,883.8", "#333", "#fff"], [158, "13,933.3", "#222", "#f4c41c"], [190, "13,855.0", "#2ce83c", "#fff"], [204, "13,804.6", "#b03038", "#fff"],
    [223, "13,729.9", "#3830a8", "#fff"], [267, "13,566.2", "#a020e8", "#fff"], [297, "13,452.2", "#507850", "#fff"],
    [368, "13,188.1", "#f030d0", "#fff"], [408, "13,034.2", "#fca424", "#fff"], [452, "12,869.2", "#222", "#fff"],
    [491, "12,722.9", "#f83030", "#fff"]
].forEach(([y, t, c, bg]) => {
    add("priceAxis", "path", { d: `M984 ${y + 5.5}h4`, stroke: c });
    add("priceAxis", "rect", { x: 987.5, y: y + 0.5, width: 34, height: 10, style: "fill:" + bg, class: "tag" });
    add("priceAxis", "text", { x: 989, y: y + 9, class: "tick", style: "fill:" + c }, t);
});
add("priceAxis", "rect", { x: 988, y: 169, width: 32, height: 13, fill: "#8cf08c" });
add("priceAxis", "text", { x: 989, y: 179, class: "bold" }, "1h26m");

// dates
[
    [26, "15"], [67, "16"], [108, "17"], [149, "18"], [190, "20"], [238, "22"], [280, "23"], [321, "24"], [355, "27"], [403, "29"],
    [444, "30"], [485, "31"], [526, "2021"], [574, "05"], [615, "06"], [657, "07"], [698, "08"], [739, "10"], [787, "12"],
    [828, "13"], [870, "14"], [911, "15"], [952, "17"]
].forEach(([x, t]) => {
    add("timeAxis", "path", { d: `M${x + 0.5} 543v3`, stroke: "#8a9da0" });
    add("timeAxis", "text", { x: x, y: 554, "text-anchor": "middle", class: t === "2021" ? "bold" : "tick" }, t);
});
```
